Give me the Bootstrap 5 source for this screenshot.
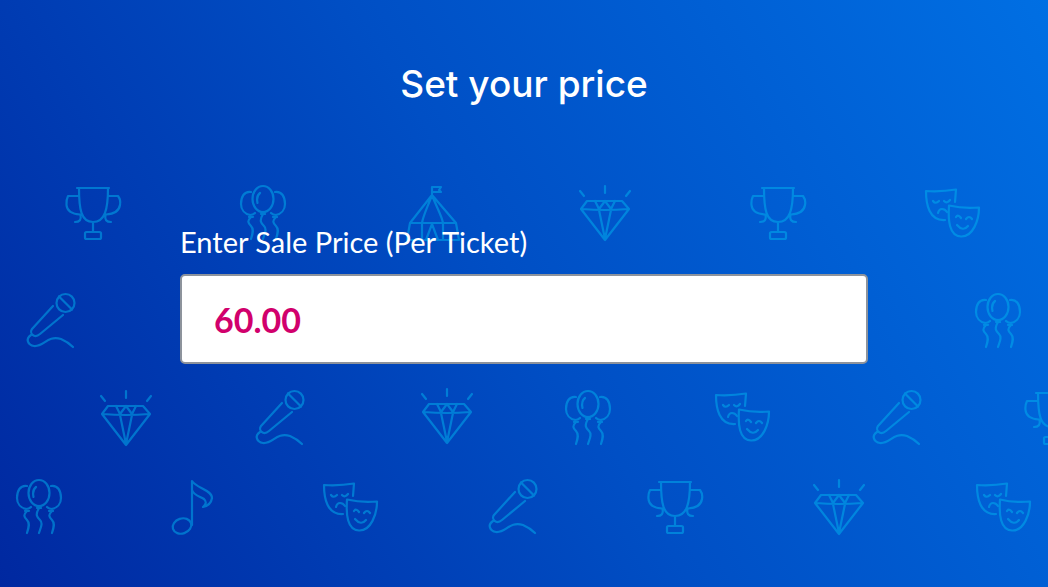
<!DOCTYPE html>
<html lang="en">
<head>
<meta charset="utf-8">
<meta name="viewport" content="width=device-width, initial-scale=1">
<title>Set your price</title>
<link href="https://cdn.jsdelivr.net/npm/bootstrap@5.3.0/dist/css/bootstrap.min.css" rel="stylesheet">
<style>
  .price-page {
    font-family: Lato, "Liberation Sans", sans-serif;
    background: linear-gradient(60deg, #0028a0 0%, #004fc5 50%, #006fe3 100%);
    padding: 56px 0;
  }
  .pattern { color: #00b4f0; opacity: .5; }
  .price-form { width: calc(100% - 360px); min-width: 66%; max-width: 90%; gap: 114px; }
  .price-title { font: 500 37px/56px Inter, sans-serif; }
  .price-label { font-size: 29px; line-height: 32px; margin-bottom: 16px; }
  .price-input, .price-input:focus {
    height: 90px;
    padding: 0 32px;
    border: 2px solid #8d939c;
    border-radius: 5px;
    color: #d1006c;
    background: #fff;
    font-size: 34px;
    font-weight: 700;
  }
  @media (min-width: 768px) {
    .price-form { min-width: 0; }
  }
</style>
</head>
<body>
<main class="price-page position-relative overflow-hidden min-vh-100 text-white">
  <svg class="pattern position-absolute top-0 start-0 w-100 h-100" viewBox="0 0 1048 587" preserveAspectRatio="xMidYMid slice" fill="none" stroke="currentColor" stroke-width="2.200" stroke-linecap="round" stroke-linejoin="round" aria-hidden="true">
    <defs>
      <g id="trophy">
        <path d="M22 13H54M24 13C24 34 26 47 38 47S53 34 53 13M38 47V56M24 21H13Q11 25 11.500 30C12 36 17 39 25 39.500M53 21H63Q66 25 65 30C64 36 59 39 51 39.500M25.500 40Q27 47 20 47M50.500 40Q49 47 56 47"/>
        <rect x="30" y="57" width="16" height="7" rx="1.500"/>
      </g>
      <g id="balloons">
        <ellipse cx="38" cy="24" rx="10.500" ry="13"/>
        <path d="M32.500 28Q31 21 35 18M26 17C19 16 16 22 16 29C16 35 20 39 25 40Q28 40 30 38M50 17C57 16 60 22 60 29C60 35 56 39 51 40Q48 40 46 38M24 42L25 40L28 42ZM48 42L51 40L52 42ZM36 39L38 37L40 39Z"/>
        <path d="M26 42C22 46 23 48 26 51S28 58 26 64M38 39C34 46 36 48 39 51S40 58 38 64M51 42C47 46 48 48 51 51S53 58 51 64"/>
      </g>
      <g id="tent">
        <path d="M37 20V12H46L44 15L46 17H37M37 20L15 48H61L37 20ZM37 20C33 31 28 41 27 48V65M37 20C41 31 47 41 48 48V65M15 48L12 65H64L61 48M37 49L31 65M37 49L43 65"/>
      </g>
      <g id="diamond">
        <path d="M22 26H57L64 34L40 65L16 34ZM17 34Q40 36 63 34M30 26L34 34L40 26L46 34L50 26M34 35L40 64L46 35M40 11V18M15 16L19 21M65 16L61 21"/>
      </g>
      <g id="masks">
        <path d="M40 27L41 14.500Q26 17 11 16C11 29 14 46 30 45M18 26Q20.500 29.500 24 26M29 26Q32 29 35 25M23 38Q24 34 27 34T32 37"/>
        <path d="M34 30.500Q49 34 64 32.500C64 45 58 62 46 61.500S33 45 34 30.500ZM41 42Q43 39 46 43M51 44Q54 40 57 44M42 50Q48 57 53 51"/>
      </g>
      <g id="mic">
        <circle cx="50.500" cy="18" r="9"/>
        <path d="M44 11.500L57 24.500M38 21L17 44C14 48 19 54 25 49L48 30M16 50C10 54 13 60 19 61C29 62 32 50 46 54Q53 57 58 62"/>
      </g>
      <g id="note">
        <ellipse cx="22" cy="56" rx="9.500" ry="7.500" transform="rotate(-18 22 56)"/>
        <path d="M32 55V11C36 18 52 20 52 28Q51 35 43 37Q48 33 44 29C40 26 34 26 32 20"/>
      </g>
    </defs>
    <use href="#trophy" x="55" y="175"/><use href="#balloons" x="225" y="175"/><use href="#tent" x="395" y="175"/>
    <use href="#diamond" x="565" y="175"/><use href="#trophy" x="740" y="175"/><use href="#masks" x="915" y="175"/>
    <use href="#mic" x="15" y="285"/><use href="#balloons" x="960" y="283"/>
    <use href="#diamond" x="86" y="380"/><use href="#mic" x="244" y="382"/><use href="#diamond" x="407" y="378"/>
    <use href="#balloons" x="550" y="380"/><use href="#masks" x="705" y="379"/><use href="#mic" x="861" y="382"/><use href="#trophy" x="1014" y="380"/>
    <use href="#balloons" x="1" y="469"/><use href="#note" x="160" y="470"/><use href="#masks" x="313" y="469"/>
    <use href="#mic" x="477" y="471"/><use href="#trophy" x="637" y="469"/><use href="#diamond" x="799" y="469"/><use href="#masks" x="966" y="469"/>
  </svg>
  <form class="price-form position-relative mx-auto d-flex flex-column">
    <h1 class="price-title text-center mb-0">Set your price</h1>
    <div>
      <label class="price-label d-block" for="price">Enter Sale Price (Per Ticket)</label>
      <input class="price-input form-control" id="price" type="text" inputmode="decimal" value="60.00">
    </div>
  </form>
</main>
<script src="https://cdn.jsdelivr.net/npm/bootstrap@5.3.0/dist/js/bootstrap.bundle.min.js"></script>
</body>
</html>
